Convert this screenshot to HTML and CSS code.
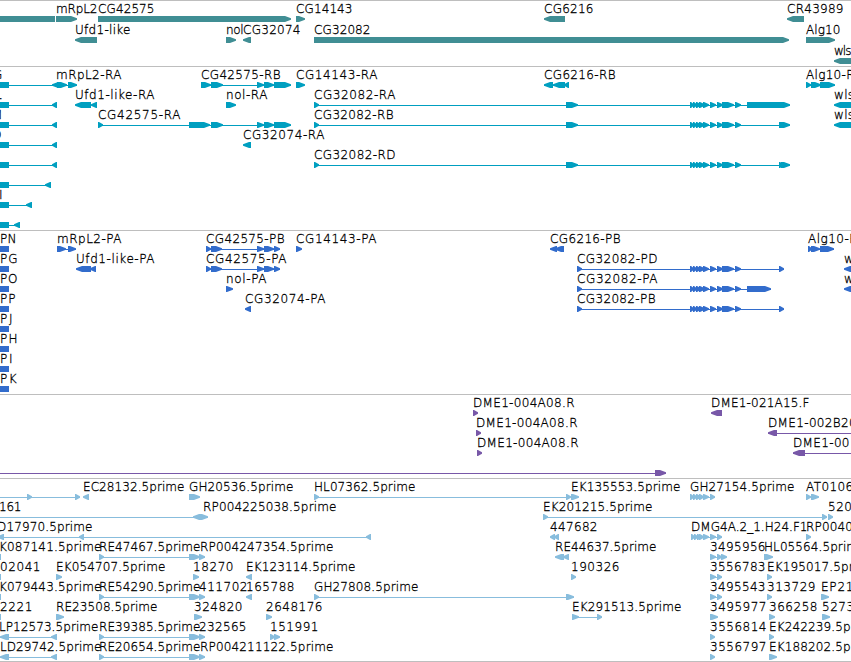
FILE: index.html
```html
<!DOCTYPE html>
<html lang="en">
<head>
    <meta charset="UTF-8">
    <title>Genome Browser</title>

    <link rel="stylesheet" href="styles.css">
</head>
<body>

    <main class="browser">
        <section class="track genes"><svg id="genes" width="851" height="65"></svg></section>
        <section class="track transcripts"><svg id="transcripts" width="851" height="163"></svg></section>
        <section class="track proteins"><svg id="proteins" width="851" height="163"></svg></section>
        <section class="track clones"><svg id="clones" width="851" height="83"></svg></section>
        <section class="track ests"><svg id="ests" width="851" height="182"></svg></section>
    </main>

    <script src="tracks.js"></script>
</body>
</html>
```

FILE: styles.css
```css
body {
    margin: 0;
    padding: 0;
    background-color: #fff;
    overflow: hidden;
}

.browser {
    display: flex;
    flex-direction: column;
    width: 851px;
    border-bottom: 1px solid #bebebe;
}

.track {
    border-top: 1px solid #bebebe;
}

.track svg {
    display: block;
    overflow: hidden;
}

.track text {
    font-family: "DejaVu Sans Light", "DejaVu Sans", sans-serif;
    font-size: 12px;
    font-weight: 200;
    fill: #000;
    stroke: #000;
    stroke-width: 0.3px;
}

.genes {
    color: #408e94;
}

.transcripts {
    color: #009fc0;
}

.proteins {
    color: #326ccc;
}

.clones {
    color: #7858a8;
}

.ests {
    color: #88bddd;
}

.part {
    fill: currentColor;
}
```

FILE: tracks.js
```js
// feature: [row, label start, label end, label, parts]
// parts: > and < are arrows, = is a block, - is an intron line
var exons = '>690:694 >693:697 >696:701 >699:705 >703:709 >710:716 >717:723 >722:734 >735:741';
var cdna = '>99:104 -99:205 >189:200 >199:205';
var stop57 = '=0:9 -0:57 <52:57';

var tracks = {
    genes: [
        [0, 0, 0, '', '=0:55'],
        [0, 56, 97, 'mRpL2', '>56:77'],
        [0, 98, 154, 'CG42575', '>98:291'],
        [0, 296, 352, 'CG14143', '>296:305'],
        [0, 544, 593, 'CG6216', '<544:565'],
        [0, 787, 843, 'CR43989', '<787:804'],
        [1, 75, 130, 'Ufd1-like', '<75:97'],
        [1, 226, 243, 'nol', '>226:236'],
        [1, 243, 300, 'CG32074', '<243:251'],
        [1, 314, 370, 'CG32082', '>314:789'],
        [1, 806, 840, 'Alg10', '>806:835'],
        [2, 834, 851, 'wls', '<834:870']
    ],
    transcripts: [
        [0, -7, 2, 'G', '=0:9 -0:57 <52:60'],
        [1, -5, 2, 'L', stop57],
        [2, -8, 2, 'M', stop57],
        [3, -8, 2, 'O', stop57],
        [4, 0, 0, '', stop57],
        [5, 0, 0, '', '=0:9 -0:51 <45:51'],
        [6, -1, 3, 'I', '=0:9 -0:32 <26:32'],
        [7, 0, 0, '', '=0:9 -0:20 <14:20'],
        [0, 56, 121, 'mRpL2-RA', '>57:67 -57:77 >68:77'],
        [0, 201, 280, 'CG42575-RB', '>201:211 -201:291 >211:223 >257:264 >264:274 >274:291'],
        [0, 296, 377, 'CG14143-RA', '>296:305'],
        [0, 544, 615, 'CG6216-RB', '<544:553 -544:569 <553:565 <564:569'],
        [0, 806, 862, 'Alg10-RA', '>806:811 -806:835 >811:821 >820:835'],
        [1, 75, 154, 'Ufd1-like-RA', '<75:91 <91:97'],
        [1, 226, 267, 'nol-RA', '>226:236'],
        [1, 314, 395, 'CG32082-RA', '>314:319 -314:790 >566:578 ' + exons + ' >747:790'],
        [1, 834, 875, 'wls-RA', '<834:870'],
        [2, 98, 180, 'CG42575-RA', '>98:103 -98:291 >189:210 >211:223 >257:264 >264:274 >274:291'],
        [2, 314, 393, 'CG32082-RB', '>314:319 -314:790 >566:578 ' + exons + ' >779:790'],
        [2, 834, 875, 'wls-RB', '<834:870'],
        [3, 243, 324, 'CG32074-RA', '<243:251'],
        [4, 314, 395, 'CG32082-RD', '>314:319 -314:790 >566:578 ' + exons + ' >779:784 >781:790']
    ],
    proteins: [
        [0, 0, 16, 'PN', '=0:9'],
        [1, 0, 17, 'PG', '=0:9'],
        [2, 0, 17, 'PO', '=0:9'],
        [3, 0, 15, 'PP', '=0:9'],
        [4, 0, 12, 'PJ', '=0:9'],
        [5, 0, 17, 'PH', '=0:9'],
        [6, 0, 12, 'PI', '=0:9'],
        [7, 0, 16, 'PK', '=0:9'],
        [0, 57, 121, 'mRpL2-PA', '>57:66 -57:76 >68:76'],
        [0, 206, 284, 'CG42575-PB', '>206:211 -206:280 >211:222 >257:264 >264:274 >274:280'],
        [0, 296, 376, 'CG14143-PA', '>296:302'],
        [0, 550, 620, 'CG6216-PB', '<550:557 <555:564'],
        [0, 808, 864, 'Alg10-PA', '>808:812 -808:834 >811:820 >820:834'],
        [1, 76, 154, 'Ufd1-like-PA', '<76:91 <90:96'],
        [1, 206, 286, 'CG42575-PA', '>206:211 -206:280 >211:222 >257:264 >264:274 >274:280'],
        [1, 577, 657, 'CG32082-PD', '>577:582 -577:784 ' + exons + ' >779:784'],
        [1, 844, 887, 'wls-PA', '<844:870'],
        [2, 226, 266, 'nol-PA', '>226:233'],
        [2, 577, 657, 'CG32082-PA', '>577:582 -577:771 ' + exons + ' >747:771'],
        [2, 844, 887, 'wls-PB', '<844:870'],
        [3, 245, 325, 'CG32074-PA', '<245:251'],
        [3, 577, 655, 'CG32082-PB', '>577:582 -577:784 ' + exons + ' >779:784']
    ],
    clones: [
        [0, 473, 574, 'DME1-004A08.R', '>473:478'],
        [1, 476, 577, 'DME1-004A08.R', '>476:481'],
        [2, 477, 578, 'DME1-004A08.R', '>477:482'],
        [3, 0, 0, '', '-0:666 >655:666'],
        [0, 711, 809, 'DME1-021A15.F', '<711:722'],
        [1, 768, 869, 'DME1-002B20.R', '<768:777 -768:870'],
        [2, 793, 849, 'DME1-00', '<793:805 -793:870']
    ],
    ests: [
        [0, 0, 0, '', '-0:80 >27:32 >75:80'],
        [0, 83, 184, 'EC28132.5prime', '<83:89'],
        [0, 189, 293, 'GH20536.5prime', '>189:200'],
        [0, 314, 415, 'HL07362.5prime', '>314:319 -314:570 >566:571'],
        [0, 571, 680, 'EK135553.5prime', '>571:579'],
        [0, 690, 794, 'GH27154.5prime', '>690:694 -690:715 >693:697 >696:701 >699:704 >703:709 >710:715'],
        [0, 806, 910, 'AT01063.5prime', '>806:811 >811:819'],
        [1, -1, 21, '161', '-0:208 <193:200 >200:208'],
        [1, 203, 336, 'RP004225038.5prime', ''],
        [1, 543, 652, 'EK201215.5prime', '>543:548 -543:827 >822:827'],
        [1, 828, 876, '520316', '>828:833'],
        [2, -3, 92, 'D17970.5prime', '<-2:4 -0:371 <79:84 <366:371'],
        [2, 550, 597, '447682', '<550:555 <554:559'],
        [2, 691, 807, 'DMG4A.2_1.H24.F1', '>691:695 -691:722 >694:698 >697:702 >699:704 >703:709 >710:716 >717:722'],
        [2, 806, 939, 'RP004018324.5prime', '>806:811'],
        [3, -1, 101, 'K087141.5prime', '=0:1'],
        [3, 99, 200, 'RE47467.5prime', cdna],
        [3, 200, 333, 'RP004247354.5prime', ''],
        [3, 555, 656, 'RE44637.5prime', '<555:564 <563:569'],
        [3, 710, 765, '3495956', '>710:716 -710:722 >717:722 >721:727'],
        [3, 764, 865, 'HL05564.5prime', '>764:773'],
        [4, 0, 40, '02041', '=0:1'],
        [4, 56, 165, 'EK054707.5prime', '>56:62'],
        [4, 193, 233, '18270', '>193:199'],
        [4, 246, 355, 'EK123114.5prime', '<246:252'],
        [4, 571, 619, '190326', '>571:576'],
        [4, 710, 765, '3556783', '>710:716 -710:722 >717:722'],
        [4, 767, 876, 'EK195017.5prime', '>767:772'],
        [5, -1, 101, 'K079443.5prime', '=0:1'],
        [5, 99, 200, 'RE54290.5prime', cdna],
        [5, 199, 247, '411702', ''],
        [5, 246, 294, '165788', '<246:252'],
        [5, 314, 418, 'GH27808.5prime', '>314:319 -314:574 >566:574'],
        [5, 710, 765, '3495543', '>710:716 -710:722 >717:722'],
        [5, 767, 815, '313729', '>767:772'],
        [5, 821, 930, 'EP21083.5prime', '>821:829'],
        [6, 0, 32, '2221', '=0:1'],
        [6, 56, 157, 'RE23508.5prime', '>56:64'],
        [6, 194, 242, '324820', '>194:202'],
        [6, 266, 322, '2648176', '>266:272'],
        [6, 572, 681, 'EK291513.5prime', '>572:579 -572:602 >597:602'],
        [6, 710, 766, '3495977', '>710:718'],
        [6, 769, 817, '366258', '>769:775'],
        [6, 822, 870, '527304', '>822:830'],
        [7, -1, 98, 'LP12573.5prime', '<0:9 -0:57 <51:57'],
        [7, 99, 200, 'RE39385.5prime', cdna],
        [7, 199, 246, '232565', ''],
        [7, 270, 318, '151991', '>270:275 >274:280'],
        [7, 710, 766, '3556814', '>710:715'],
        [7, 769, 878, 'EK242239.5prime', '>769:774'],
        [8, 0, 101, 'LD29742.5prime', '<0:9 -0:57 <51:57'],
        [8, 99, 200, 'RE20654.5prime', cdna],
        [8, 200, 333, 'RP004211122.5prime', ''],
        [8, 710, 766, '3556797', '>710:715'],
        [8, 769, 878, 'EK188202.5prime', '>769:777']
    ]
};

function addNode(svg, name, attrs) {
    var node = document.createElementNS('http://www.w3.org/2000/svg', name);
    for (var key in attrs) {
        node.setAttribute(key, attrs[key]);
    }
    svg.appendChild(node);
    return node;
}

function partPath(type, a, b, top) {
    var mid = top + 3;
    var bottom = top + 6;
    var head = Math.min(6, b - a - 1);
    if (type === '-') {
        return 'M' + a + ' ' + mid + 'H' + b + 'v1H' + a + 'Z';
    }
    if (type === '=') {
        return 'M' + a + ' ' + top + 'H' + b + 'V' + bottom + 'H' + a + 'Z';
    }
    if (type === '>') {
        return 'M' + a + ' ' + top + 'H' + (b - head) + 'L' + b + ' ' + (mid - 0.8) + 'v1.6L' + (b - head) + ' ' + bottom + 'H' + a + 'Z';
    }
    return 'M' + b + ' ' + top + 'H' + (a + head) + 'L' + a + ' ' + (mid - 0.8) + 'v1.6L' + (a + head) + ' ' + bottom + 'H' + b + 'Z';
}

for (var id in tracks) {
    var svg = document.getElementById(id);
    var pitch = id === 'genes' ? 21 : 20;

    tracks[id].forEach(function (feature) {
        var baseline = 12 + feature[0] * pitch;

        feature[4].split(' ').filter(Boolean).forEach(function (part) {
            var range = part.slice(1).split(':').map(Number);
            addNode(svg, 'path', {
                'class': 'part',
                d: partPath(part[0], range[0], range[1], baseline + 3)
            });
        });

        if (feature[3]) {
            addNode(svg, 'text', {
                x: feature[1],
                y: baseline,
                textLength: feature[2] - feature[1] + 0.5
            }).textContent = feature[3];
        }
    });
}
```
